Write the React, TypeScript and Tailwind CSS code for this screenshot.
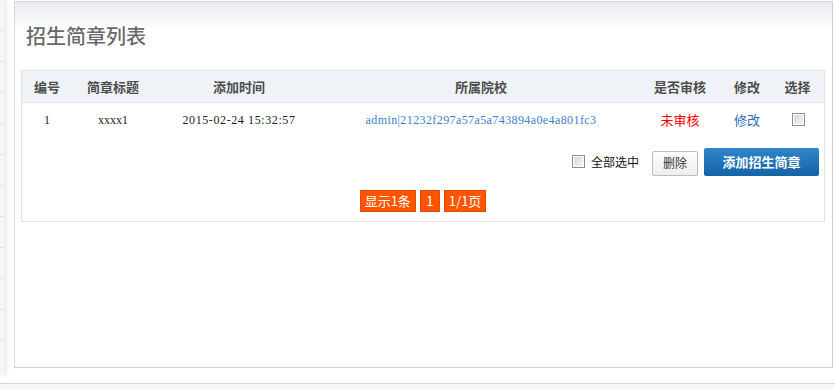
const cjk = "font-['Noto_Sans_CJK_SC','Noto_Sans',sans-serif]"
const serif = "font-['Liberation_Serif','Noto_Sans_CJK_SC',serif]"

const cols = ['w-[50px]', 'w-[82px]', 'w-[170px]', 'w-[314px]', 'w-[84px]', 'w-[50px]', 'w-[51px]']
const heads = ['编号', '简章标题', '添加时间', '所属院校', '是否审核', '修改', '选择']

function Box() {
  return (
    <span className="inline-block w-[13px] h-[13px] border border-[#8e8e8e] bg-gradient-to-br from-[#d6d6d6] to-[#f7f7f7] shadow-[inset_0_0_0_1px_#fff]" />
  )
}

export default function App() {
  return (
    <div className={`w-[835px] h-[389px] bg-white flex flex-col overflow-hidden ${cjk}`}>
      <div className="h-[383px] flex items-start">
        {/* 侧栏残边 */}
        <div className="w-[4px] h-[375px] bg-[#f6f6f6] shadow-[2px_0_5px_rgba(0,0,0,0.12)] flex flex-col">
          {Array.from({ length: 11 }).map((_, i) => (
            <div key={i} className="h-[31px] shrink-0 border-b border-[#e2e2e2]" />
          ))}
        </div>

        <div className="ml-[10px] mt-[1px] w-[819px] h-[367px] border border-[#d3d8dc] border-r-[#cfcfcf] border-b-[#cfcfcf] bg-gradient-to-b from-[#e9ebef] via-white via-[8%] to-white">
          <h1 className="pl-[11px] pt-[21px] h-[68px] text-[20px] leading-[26px] text-[#6a6a6a] font-medium">招生简章列表</h1>

          <div className="ml-[6px] w-[804px] h-[152px] border border-[#dde3e7] bg-white">
            {/* 表头 */}
            <div className="flex h-[32px] bg-[#eff3f8] border-b border-[#dfe6ec] text-[13px] font-bold text-[#4d4d4d]">
              {heads.map((h, i) => (
                <div key={h} className={`${cols[i]} flex items-center justify-center`}>{h}</div>
              ))}
            </div>

            {/* 数据行 */}
            <div className="flex h-[33px] items-center text-[12px]">
              <div className={`${cols[0]} text-center ${serif} text-[#222]`}>1</div>
              <div className={`${cols[1]} text-center ${serif} text-[#222]`}>xxxx1</div>
              <div className={`${cols[2]} text-center ${serif} tracking-[0.6px] text-[#222]`}>2015-02-24 15:32:57</div>
              <div className={`${cols[3]} text-center ${serif} tracking-[0.4px] text-[#3b7fc8]`}>admin|21232f297a57a5a743894a0e4a801fc3</div>
              <div className={`${cols[4]} text-center text-[13px] text-[#ff0000]`}>未审核</div>
              <div className={`${cols[5]} text-center text-[13px] text-[#2a6db5]`}>修改</div>
              <div className={`${cols[6]} flex justify-center pl-[2px]`}><Box /></div>
            </div>

            {/* 操作 */}
            <div className="flex items-center justify-end pr-[5px] mt-[11px] h-[29px]">
              <Box />
              <span className="ml-[6px] text-[12px] text-[#111]">全部选中</span>
              <button className="ml-[13px] w-[46px] h-[25px] mt-[3px] border border-[#bdbdbd] rounded-[2px] bg-gradient-to-b from-white to-[#ededed] text-[12px] text-[#333]">删除</button>
              <button className="ml-[6px] w-[115px] h-[28px] rounded-[2px] bg-gradient-to-b from-[#2f86ca] to-[#1463a6] text-[13px] font-bold text-white">添加招生简章</button>
            </div>

            {/* 分页 */}
            <div className="flex justify-center gap-[4px] mt-[14px] text-[13px] text-white">
              <span className="h-[22px] px-[4px] flex items-center bg-[#ff5500] border border-[#e24c00]">显示1条</span>
              <span className="h-[22px] w-[20px] flex items-center justify-center bg-[#ff5500] border border-[#e24c00]">1</span>
              <span className="h-[22px] px-[4px] flex items-center bg-[#ff5500] border border-[#e24c00]">1/1页</span>
            </div>
          </div>
        </div>
      </div>
      <div className="flex-1 border-t border-[#d6d6d6] bg-[#f7f7f7]" />
    </div>
  )
}
